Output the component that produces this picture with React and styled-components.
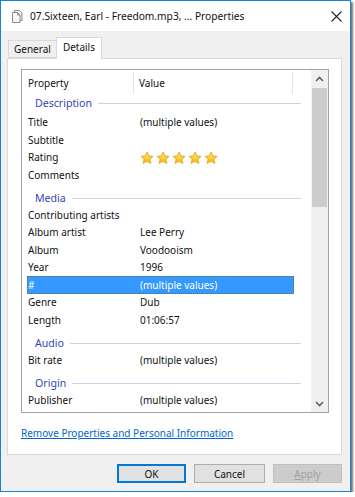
import React from 'react';
import styled, { createGlobalStyle } from 'styled-components';

const Global = createGlobalStyle`
  html, body { margin: 0; padding: 0; background: #fff; }
  body { font-family: "Noto Sans", "Liberation Sans", sans-serif; }
`;

const Frame = styled.div`
  width: 351px;
  height: 492px;
  box-sizing: border-box;
  border: 1px solid #1883d7;
  display: flex;
  flex-direction: column;
  box-shadow: 2px 2px 2px rgba(0, 0, 0, 0.55);
`;

const TitleBar = styled.div`
  height: 30px;
  background: #fff;
  display: flex;
  align-items: center;
  padding-left: 9px;
  gap: 6px;
`;

const Title = styled.div`
  flex: 1;
  font-size: 10.2px;
  color: #111;
  white-space: nowrap;
`;

const CloseBox = styled.div`
  width: 30px;
  height: 30px;
  display: flex;
  align-items: center;
  justify-content: center;
  margin-right: -1px;
`;

const Body = styled.div`
  flex: 1;
  background: #f0f0f0;
  padding: 6px 8px 0 6px;
  display: flex;
  flex-direction: column;
`;

const TabStrip = styled.div`
  height: 21px;
  display: flex;
  align-items: flex-end;
  padding-left: 1px;
  position: relative;
  z-index: 1;
`;

const Tab = styled.div`
  box-sizing: border-box;
  height: ${p => (p.$active ? 22 : 18)}px;
  margin-bottom: ${p => (p.$active ? -1 : 0)}px;
  margin-left: ${p => (p.$active ? -1 : 0)}px;
  padding: ${p => (p.$active ? '2px 6px 0 6px' : '1px 5px 0 5px')};
  border: 1px solid #d9d9d9;
  border-bottom: ${p => (p.$active ? 'none' : '1px solid #d9d9d9')};
  background: ${p => (p.$active ? '#fff' : '#f0f0f0')};
  font-size: 10px;
  line-height: 15px;
  color: #111;
`;

const Panel = styled.div`
  height: 397px;
  box-sizing: border-box;
  background: #fff;
  border: 1px solid #d9d9d9;
  padding: 10px 12px 0 13px;
  display: flex;
  flex-direction: column;
`;

const ListBox = styled.div`
  height: 344px;
  box-sizing: border-box;
  border: 1px solid #a3a3a3;
  display: flex;
  overflow: hidden;
`;

const ListContent = styled.div`
  flex: 1;
  display: flex;
  flex-direction: column;
  overflow: hidden;
  font-size: 10px;
  color: #111;
`;

const Header = styled.div`
  height: 25px;
  flex-shrink: 0;
  display: grid;
  grid-template-columns: 112px 159px 1fr;
  align-items: center;
`;

const HeadCell = styled.div`
  height: 22px;
  line-height: 22px;
  padding-left: ${p => (p.$first ? 6 : 5)}px;
  border-right: 1px solid ${p => (p.$last ? 'transparent' : '#e5e5e5')};
`;

const Group = styled.div`
  height: ${p => (p.$first ? 18.5 : 22.5)}px;
  flex-shrink: 0;
  box-sizing: border-box;
  padding-top: ${p => (p.$first ? 1 : 7)}px;
  margin: 0 10px 0 5px;
  display: flex;
  align-items: flex-start;
`;

const GroupLabel = styled.span`
  font-size: 10.6px;
  line-height: 15px;
  color: #3346b5;
  padding-left: 8px;
`;

const GroupRule = styled.div`
  flex: 1;
  height: 1px;
  background: #c8d4e8;
  margin: 7px 0 0 6px;
`;

const Row = styled.div`
  height: 17.5px;
  flex-shrink: 0;
  box-sizing: border-box;
  margin-left: 5px;
  width: 267px;
  display: grid;
  grid-template-columns: 112px 1fr;
  align-items: center;
  padding-left: 1px;
  background: ${p => (p.$selected ? '#3399ff' : 'transparent')};
  color: ${p => (p.$selected ? '#fff' : '#111')};
  outline: ${p => (p.$selected ? '1px dotted #6a6a6a' : 'none')};
  outline-offset: -1px;
  white-space: nowrap;
`;

const Stars = styled.div`
  display: flex;
  gap: 2px;
  padding-top: 1px;
`;

const ScrollBar = styled.div`
  width: 17px;
  background: #f0f0f0;
  display: flex;
  flex-direction: column;
`;

const ScrollArrow = styled.div`
  height: 17px;
  display: flex;
  align-items: center;
  justify-content: center;
`;

const Track = styled.div`
  flex: 1;
  padding: 1px 1px 0 1px;
`;

const Thumb = styled.div`
  height: 119px;
  background: #cdcdcd;
`;

const Link = styled.a`
  margin-top: 13px;
  font-size: 10px;
  color: #0066cc;
  text-decoration: underline;
  align-self: flex-start;
`;

const Footer = styled.div`
  display: flex;
  justify-content: flex-end;
  gap: 8px;
  padding-top: 9px;
`;

const Button = styled.div`
  width: ${p => p.$w}px;
  height: 19px;
  box-sizing: border-box;
  border: ${p => (p.$default ? '2px solid #0078d7' : p.$disabled ? '1px solid #bfbfbf' : '1px solid #adadad')};
  background: ${p => (p.$disabled ? '#cccccc' : '#e1e1e1')};
  color: ${p => (p.$disabled ? '#a0a0a0' : '#111')};
  font-size: 10px;
  display: flex;
  align-items: center;
  justify-content: center;
`;

const Underline = styled.span`
  text-decoration: underline;
`;

const FilesIcon = () => (
  <svg width="14" height="15" viewBox="0 0 14 15">
    <path d="M4.5 1.5h5l2.5 2.5v7.5h-7.5z" fill="#f4f4f4" stroke="#8a8a8a" />
    <path d="M2.5 3.5h5l2.5 2.5v7.5h-7.5z" fill="#fafafa" stroke="#8a8a8a" />
    <path d="M7.5 3.5v2.5h2.5" fill="none" stroke="#8a8a8a" />
  </svg>
);

const CloseIcon = () => (
  <svg width="11" height="11" viewBox="0 0 11 11">
    <path d="M0.5 0.5l10 10M10.5 0.5l-10 10" stroke="#222" strokeWidth="1.1" />
  </svg>
);

const Star = () => (
  <svg width="14" height="14" viewBox="0 0 24 24">
    <defs>
      <linearGradient id="sg" x1="0" y1="0" x2="0" y2="1">
        <stop offset="0" stopColor="#ffe680" />
        <stop offset="1" stopColor="#f7b500" />
      </linearGradient>
    </defs>
    <path
      d="M12 1.5l3.1 6.8 7.4.8-5.5 5 1.6 7.3L12 17.6l-6.6 3.8 1.6-7.3-5.5-5 7.4-.8z"
      fill="url(#sg)"
      stroke="#e09a00"
      strokeWidth="1.2"
      strokeLinejoin="round"
    />
  </svg>
);

const Chevron = ({ up }) => (
  <svg width="9" height="6" viewBox="0 0 9 6">
    <path
      d={up ? 'M1 5l3.5-3.5L8 5' : 'M1 1l3.5 3.5L8 1'}
      fill="none"
      stroke="#606060"
      strokeWidth="1.6"
    />
  </svg>
);

const sections = [
  {
    name: 'Description',
    rows: [
      ['Title', '(multiple values)'],
      ['Subtitle', ''],
      ['Rating', 'stars'],
      ['Comments', ''],
    ],
  },
  {
    name: 'Media',
    rows: [
      ['Contributing artists', ''],
      ['Album artist', 'Lee Perry'],
      ['Album', 'Voodooism'],
      ['Year', '1996'],
      ['#', '(multiple values)', true],
      ['Genre', 'Dub'],
      ['Length', '01:06:57'],
    ],
  },
  { name: 'Audio', rows: [['Bit rate', '(multiple values)']] },
  { name: 'Origin', rows: [['Publisher', '(multiple values)']] },
];

export default function App() {
  return (
    <>
      <Global />
      <Frame>
        <TitleBar>
          <FilesIcon />
          <Title>07.Sixteen, Earl - Freedom.mp3, ... Properties</Title>
          <CloseBox>
            <CloseIcon />
          </CloseBox>
        </TitleBar>
        <Body>
          <TabStrip>
            <Tab>General</Tab>
            <Tab $active>Details</Tab>
          </TabStrip>
          <Panel>
            <ListBox>
              <ListContent>
                <Header>
                  <HeadCell $first>Property</HeadCell>
                  <HeadCell>Value</HeadCell>
                  <HeadCell $last />
                </Header>
                {sections.map((s, i) => (
                  <React.Fragment key={s.name}>
                    <Group $first={i === 0}>
                      <GroupLabel>{s.name}</GroupLabel>
                      <GroupRule />
                    </Group>
                    {s.rows.map(([k, v, sel]) => (
                      <Row key={k} $selected={sel}>
                        <span>{k}</span>
                        {v === 'stars' ? (
                          <Stars>
                            {[0, 1, 2, 3, 4].map(n => (
                              <Star key={n} />
                            ))}
                          </Stars>
                        ) : (
                          <span>{v}</span>
                        )}
                      </Row>
                    ))}
                  </React.Fragment>
                ))}
              </ListContent>
              <ScrollBar>
                <ScrollArrow>
                  <Chevron up />
                </ScrollArrow>
                <Track>
                  <Thumb />
                </Track>
                <ScrollArrow>
                  <Chevron />
                </ScrollArrow>
              </ScrollBar>
            </ListBox>
            <Link>Remove Properties and Personal Information</Link>
          </Panel>
          <Footer>
            <Button $w={69} $default>OK</Button>
            <Button $w={71}>Cancel</Button>
            <Button $w={69} $disabled>
              <Underline>A</Underline>pply
            </Button>
          </Footer>
        </Body>
      </Frame>
    </>
  );
}
